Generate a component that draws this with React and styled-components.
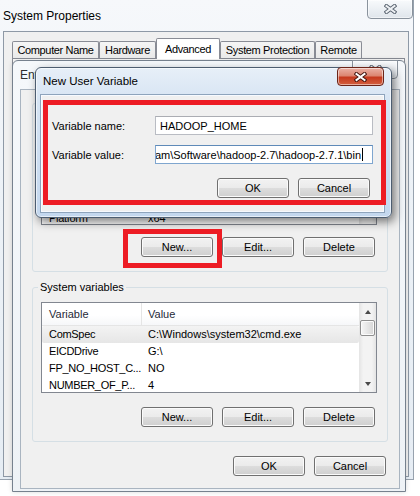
import styled, { createGlobalStyle } from "styled-components";

const GlobalStyle = createGlobalStyle`
  html, body {
    margin: 0;
    padding: 0;
    background: #fff;
  }
  body {
    font-family: "Liberation Sans", Arial, sans-serif;
    font-size: 11px;
    color: #000;
  }
  * {
    box-sizing: border-box;
  }
`;

const tabs = [
  { label: "Computer Name", w: 87 },
  { label: "Hardware", w: 57 },
  { label: "Advanced", w: 64, active: true },
  { label: "System Protection", w: 95 },
  { label: "Remote", w: 47 },
];

const userVars = [
  ["TEMP", "%USERPROFILE%\\AppData\\Local\\Temp"],
  ["TMP", "%USERPROFILE%\\AppData\\Local\\Temp"],
  ["JAVA_HOME", "C:\\Program Files\\Java\\jdk1.8.0_60"],
  ["Path", "C:\\Program Files\\Java\\jdk1.8.0_60\\bin"],
  ["Platform", "x64"],
];

const sysVars = [
  ["ComSpec", "C:\\Windows\\system32\\cmd.exe", true],
  ["EICDDrive", "G:\\"],
  ["FP_NO_HOST_C...", "NO"],
  ["NUMBER_OF_P...", "4"],
];

const CloseGlyph = ({ red }) => (
  <svg width="13" height="10" viewBox="0 0 13 10">
    <path
      d="M2.5 2 L10.5 8 M10.5 2 L2.5 8"
      stroke={red ? "#43160f" : "#5a6470"}
      strokeWidth="4"
      strokeLinecap="square"
      fill="none"
    />
    <path
      d="M2.5 2 L10.5 8 M10.5 2 L2.5 8"
      stroke={red ? "#ffffff" : "#eef1f4"}
      strokeWidth="2"
      strokeLinecap="square"
      fill="none"
    />
  </svg>
);

const VarList = ({ rows, height }) => (
  <ListView $h={height}>
    <ListBody>
      <HeaderRow>
        <HeaderCell $first>Variable</HeaderCell>
        <HeaderCell>Value</HeaderCell>
      </HeaderRow>
      {rows.map(([name, value, selected]) => (
        <Row key={name} $selected={selected}>
          <Cell $first>{name}</Cell>
          <Cell>{value}</Cell>
        </Row>
      ))}
    </ListBody>
    <ScrollBar>
      <ScrollArrow><Arrow /></ScrollArrow>
      <Track>
        <Thumb />
      </Track>
      <ScrollArrow><Arrow $down /></ScrollArrow>
    </ScrollBar>
  </ListView>
);

const App = () => {
  return (
    <Desktop>
      <GlobalStyle />

      <SysWindow>
        <TitleBar $h={31}>
          <WindowTitle $top={9}>System Properties</WindowTitle>
          <CloseButton $w={46} $h={20} $mr={-4} $mt={-1}>
            <CloseGlyph />
          </CloseButton>
        </TitleBar>
        <SysClient>
          <TabStrip>
            {tabs.map((t) => (
              <Tab key={t.label} $w={t.w} $active={t.active}>{t.label}</Tab>
            ))}
          </TabStrip>
          <TabPanel />
        </SysClient>
      </SysWindow>

      <EnvWindow>
        <TitleBar $h={28} $pl={7}>
          <WindowTitle $top={7} $dim>Environment Variables</WindowTitle>
          <CloseButton $w={46} $h={19} $mr={7} $mt={-1}>
            <CloseGlyph />
          </CloseButton>
        </TitleBar>
        <EnvClient>
          <GroupBox $mt={13}>
            <GroupLabel>User variables for Admin</GroupLabel>
            <VarList rows={userVars} height={107} />
            <ButtonRow $mt={12}>
              <Button>New...</Button>
              <Button>Edit...</Button>
              <Button>Delete</Button>
            </ButtonRow>
          </GroupBox>
          <GroupBox $mt={15}>
            <GroupLabel>System variables</GroupLabel>
            <VarList rows={sysVars} height={91} />
            <ButtonRow $mt={14}>
              <Button>New...</Button>
              <Button>Edit...</Button>
              <Button>Delete</Button>
            </ButtonRow>
          </GroupBox>
          <Footer>
            <Button>OK</Button>
            <Button>Cancel</Button>
          </Footer>
        </EnvClient>
      </EnvWindow>

      <Callout $x={123} $y={229} $w={99} $h={39} />

      <Dialog>
        <TitleBar $h={27} $pl={7}>
          <WindowTitle $top={6} $size={11.5}>New User Variable</WindowTitle>
          <CloseButton $red $w={47} $h={19} $mr={7} $mt={-1}>
            <CloseGlyph red />
          </CloseButton>
        </TitleBar>
        <DialogClient>
          <FormRow>
            <FieldLabel>Variable name:</FieldLabel>
            <TextBox>HADOOP_HOME</TextBox>
          </FormRow>
          <FormRow $mt={10}>
            <FieldLabel>Variable value:</FieldLabel>
            <TextBox $focus>
              <Value>D:\Program\Software\hadoop-2.7\hadoop-2.7.1\bin</Value>
              <Caret />
            </TextBox>
          </FormRow>
          <ButtonRow $mt={14} $pr={3}>
            <Button>OK</Button>
            <Button>Cancel</Button>
          </ButtonRow>
        </DialogClient>
        <Callout $x={7} $y={32} $w={343} $h={105} />
      </Dialog>
    </Desktop>
  );
};

export default App;


const Desktop = styled.div`
  position: relative;
  width: 420px;
  height: 496px;
  overflow: hidden;
  background: #fff;
`;

const SysWindow = styled.div`
  position: absolute;
  left: 0;
  top: 0;
  width: 414px;
  height: 480px;
  padding: 0 4px 2px 3px;
  display: flex;
  flex-direction: column;
  background: linear-gradient(180deg, #f6f8fb 0%, #edf2f7 40%, #e6edf4 100%);
  border-right: 1px solid #97a2ae;
  border-bottom: 1px solid #97a2ae;
`;

const TitleBar = styled.div`
  height: ${(p) => p.$h}px;
  flex-shrink: 0;
  display: flex;
  align-items: flex-start;
  padding-left: ${(p) => p.$pl || 0}px;
`;

const WindowTitle = styled.div`
  padding-top: ${(p) => p.$top}px;
  font-size: ${(p) => p.$size || 12}px;
  line-height: 14px;
  color: ${(p) => (p.$dim ? "#2e2e2e" : "#000")};
  white-space: nowrap;
`;

const CloseButton = styled.div`
  width: ${(p) => p.$w}px;
  height: ${(p) => p.$h}px;
  margin: ${(p) => p.$mt || 0}px ${(p) => p.$mr || 0}px 0 auto;
  flex-shrink: 0;
  display: flex;
  align-items: center;
  justify-content: center;
  border: 1px solid ${(p) => (p.$red ? "#6b2418" : "#8a939d")};
  border-radius: ${(p) => (p.$red ? "4px" : "0 0 4px 4px")};
  background: ${(p) =>
    p.$red
      ? "linear-gradient(180deg, #eab1a5 0%, #dc8672 45%, #c63a1f 55%, #d2603f 100%)"
      : "linear-gradient(180deg, #f8fafc 0%, #ecf0f4 50%, #dfe5eb 100%)"};
  box-shadow: inset 0 0 0 1px rgba(255, 255, 255, 0.5);
`;

const SysClient = styled.div`
  flex: 1;
  display: flex;
  flex-direction: column;
  padding: 6px 3px 23px 8px;
  background: #f0f0f0;
  border: 1px solid #8e99a6;
`;

const TabStrip = styled.div`
  position: relative;
  z-index: 1;
  height: 20px;
  display: flex;
  align-items: flex-end;
`;

const Tab = styled.div`
  width: ${(p) => p.$w}px;
  height: ${(p) => (p.$active ? 21 : 17)}px;
  margin-bottom: ${(p) => (p.$active ? -1 : 0)}px;
  display: flex;
  align-items: center;
  justify-content: center;
  border: 1px solid #898c95;
  border-bottom: none;
  border-radius: 2px 2px 0 0;
  background: ${(p) =>
    p.$active ? "#fff" : "linear-gradient(180deg, #f5f5f5 0%, #e9e9e9 100%)"};
  letter-spacing: -0.35px;
  white-space: nowrap;
`;

const TabPanel = styled.div`
  flex: 1;
  border: 1px solid #898c95;
  background: #fcfcfc;
`;

const EnvWindow = styled.div`
  position: absolute;
  left: 12px;
  top: 60px;
  width: 394px;
  height: 432px;
  display: flex;
  flex-direction: column;
  border: 1px solid #76818e;
  border-radius: 6px 6px 0 0;
  background: linear-gradient(180deg, #f5f8fb 0%, #eef2f6 100%);
  box-shadow: 0 0 5px rgba(0, 0, 0, 0.15);
`;

const EnvClient = styled.div`
  flex: 1;
  margin: 0 5px 2px 7px;
  padding: 0 11px;
  display: flex;
  flex-direction: column;
  border: 1px solid #a9b4c0;
  background: #f0f0f0;
`;

const GroupBox = styled.div`
  position: relative;
  margin-top: ${(p) => p.$mt}px;
  padding: 14px 10px 14px 8px;
  border: 1px solid #d5dfe5;
  border-radius: 3px;
`;

const GroupLabel = styled.span`
  position: absolute;
  top: -7px;
  left: 5px;
  padding: 0 2px;
  line-height: 13px;
  background: #f0f0f0;
  white-space: nowrap;
`;

const ListView = styled.div`
  height: ${(p) => p.$h}px;
  display: flex;
  overflow: hidden;
  border: 1px solid #828790;
  background: #fff;
`;

const ListBody = styled.div`
  flex: 1;
  min-width: 0;
  display: flex;
  flex-direction: column;
`;

const HeaderRow = styled.div`
  height: 23px;
  flex-shrink: 0;
  display: grid;
  grid-template-columns: 100px 1fr;
  border-bottom: 1px solid #e5e5e5;
  background: linear-gradient(180deg, #ffffff 0%, #ffffff 55%, #f6f7f9 100%);
`;

const HeaderCell = styled.div`
  display: flex;
  align-items: center;
  padding-left: ${(p) => (p.$first ? 7 : 6)}px;
  border-right: ${(p) => (p.$first ? "1px solid #e5e5e5" : "none")};
  color: #1f2a38;
`;

const Row = styled.div`
  height: 17px;
  flex-shrink: 0;
  display: grid;
  grid-template-columns: 100px 1fr;
  line-height: 17px;
  border-radius: 2px;
  background: ${(p) =>
    p.$selected ? "linear-gradient(180deg, #f3f3f3 0%, #e6e6e6 100%)" : "transparent"};
`;

const Cell = styled.div`
  padding-left: ${(p) => (p.$first ? 7 : 6)}px;
  letter-spacing: ${(p) => (p.$first ? "-0.3px" : "0")};
  white-space: nowrap;
  overflow: hidden;
`;

const ScrollBar = styled.div`
  width: 17px;
  flex-shrink: 0;
  display: flex;
  flex-direction: column;
  background: linear-gradient(90deg, #e4e4e4 0%, #f3f3f3 25%, #f3f3f3 75%, #e4e4e4 100%);
`;

const ScrollArrow = styled.div`
  height: 17px;
  flex-shrink: 0;
  display: flex;
  align-items: center;
  justify-content: center;
`;

const Arrow = styled.span`
  width: 0;
  height: 0;
  border-left: 3.5px solid transparent;
  border-right: 3.5px solid transparent;
  border-top: ${(p) => (p.$down ? "4px solid #4a4a4a" : "none")};
  border-bottom: ${(p) => (p.$down ? "none" : "4px solid #4a4a4a")};
`;

const Track = styled.div`
  flex: 1;
`;

const Thumb = styled.div`
  height: 16px;
  margin: 0 1px;
  border: 1px solid #8f8f8f;
  border-radius: 2px;
  background: linear-gradient(90deg, #f6f6f6 0%, #e6e6e6 50%, #d6d6d6 100%);
  box-shadow: inset 0 0 0 1px #fbfbfb;
`;

const ButtonRow = styled.div`
  margin-top: ${(p) => p.$mt}px;
  padding-right: ${(p) => (p.$pr !== undefined ? p.$pr : 2)}px;
  display: flex;
  justify-content: flex-end;
  gap: 9px;
`;

const Footer = styled.div`
  margin: 14px 2px 0 0;
  display: flex;
  justify-content: flex-end;
  gap: 9px;
`;

const Button = styled.button`
  width: 72px;
  height: 20px;
  padding: 0;
  font-family: "Liberation Sans", Arial, sans-serif;
  font-size: 11px;
  color: #000;
  border: 1px solid #707070;
  border-radius: 3px;
  background: linear-gradient(180deg, #f2f2f2 0%, #ebebeb 49%, #dddddd 50%, #cfcfcf 100%);
  box-shadow: inset 0 0 0 1px #fbfbfb;
`;

const Callout = styled.div`
  position: absolute;
  left: ${(p) => p.$x}px;
  top: ${(p) => p.$y}px;
  width: ${(p) => p.$w}px;
  height: ${(p) => p.$h}px;
  border: 5px solid #ed1c24;
  z-index: 5;
`;

const Dialog = styled.div`
  position: absolute;
  left: 35px;
  top: 67px;
  width: 357px;
  height: 151px;
  display: flex;
  flex-direction: column;
  border: 1px solid #4d5d70;
  border-radius: 6px;
  background: linear-gradient(180deg, #e7eff8 0%, #d6e4f3 22%, #c3d7ee 100%);
  box-shadow: 3px 4px 10px rgba(0, 0, 0, 0.5), inset 0 0 0 1px rgba(255, 255, 255, 0.6);
`;

const DialogClient = styled.div`
  flex: 1;
  margin: 0 7px 5px 5px;
  padding: 20px 10px 0 10px;
  border: 1px solid #f7faff;
  box-shadow: 0 0 0 1px #8ea4bc;
  background: #f0f0f0;
`;

const FormRow = styled.div`
  height: 19px;
  margin-top: ${(p) => p.$mt || 0}px;
  display: flex;
  align-items: center;
`;

const FieldLabel = styled.div`
  width: 103px;
  flex-shrink: 0;
  white-space: nowrap;
`;

const TextBox = styled.div`
  flex: 1;
  height: 19px;
  display: flex;
  align-items: center;
  justify-content: ${(p) => (p.$focus ? "flex-end" : "flex-start")};
  padding: ${(p) => (p.$focus ? "0 9px 0 0" : "0 4px")};
  overflow: hidden;
  white-space: nowrap;
  border: 1px solid ${(p) => (p.$focus ? "#7fa6cf" : "#b9bcc3")};
  border-top-color: ${(p) => (p.$focus ? "#5f8ab8" : "#abadb3")};
  background: #fff;
`;

const Value = styled.span`
  flex-shrink: 0;
`;

const Caret = styled.span`
  width: 1px;
  height: 13px;
  margin-left: 1px;
  flex-shrink: 0;
  background: #000;
`;
